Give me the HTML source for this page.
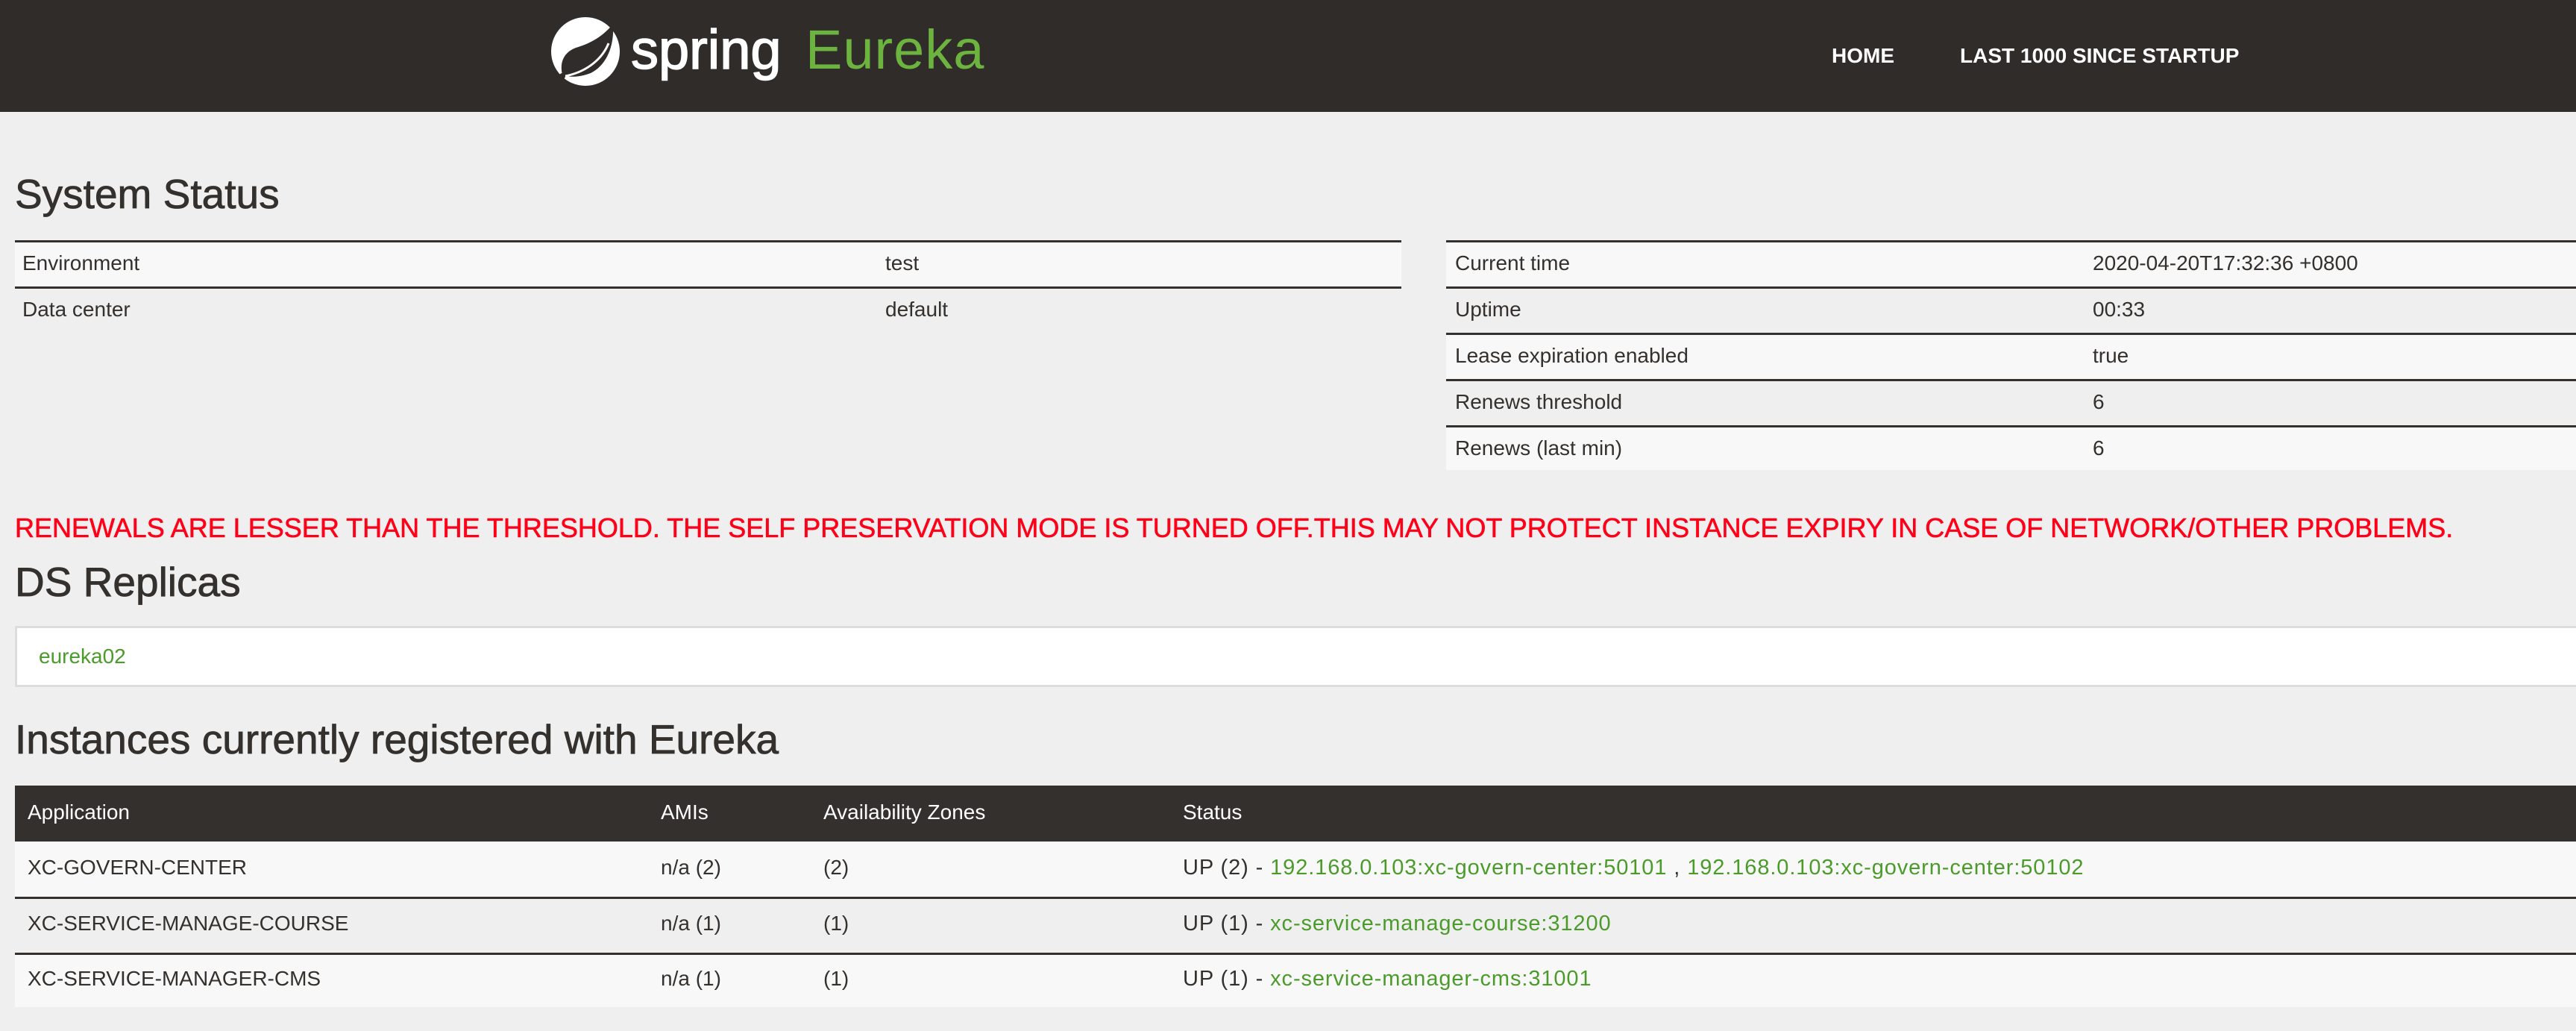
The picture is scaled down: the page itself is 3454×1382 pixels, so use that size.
<!DOCTYPE html>
<html><head><meta charset="utf-8"><style>
*{margin:0;padding:0;box-sizing:border-box}
html,body{width:3454px;height:1382px;overflow:hidden;background:#efefef;font-family:"Liberation Sans",sans-serif;color:#34302d}
.a{position:absolute;white-space:nowrap}
.hdr{position:absolute;left:0;top:0;width:3454px;height:150px;background:#302c29}
.nav{color:#fff;font-weight:bold;font-size:28px;top:59px}
.h{font-size:55px;color:#34302d;line-height:60px;-webkit-text-stroke:0.8px #34302d}
.t{font-size:28px;line-height:62px}
.row{position:absolute;height:62px}
.g{color:#4b9b2b}
.s{font-size:29px;letter-spacing:0.9px}
</style></head><body>
<div class="hdr"></div>
<svg class="a" style="left:736px;top:20px" width="100" height="100" viewBox="0 0 100 100">
<circle cx="49" cy="49" r="46" fill="#fff"/>
<path d="M86 12 C70 32 50 40 36 44 C20 50 14 64 18 80 C26 84 40 84 56 78 C76 68 88 44 86 12 Z" fill="#302c29"/>
<path d="M80 38 C72 58 52 76 22 82" stroke="#fff" stroke-width="3" fill="none"/>
<circle cx="18" cy="82" r="4" fill="#302c29"/>
</svg>
<div class="a" style="left:846px;top:22px;font-size:74px;color:#fff;line-height:90px;letter-spacing:0px;-webkit-text-stroke:1.5px #fff">spring</div>
<div class="a" style="left:1080px;top:22px;font-size:74px;color:#6db33f;line-height:90px;letter-spacing:1px">Eureka</div>
<div class="a nav" style="left:2456px">HOME</div>
<div class="a nav" style="left:2628px">LAST 1000 SINCE STARTUP</div>

<div class="a h" style="left:20px;top:230px">System Status</div>
<div class="row" style="left:20px;top:322px;width:1859px;background:#f8f8f8;border-top:3px solid #34302d"></div>
<div class="row" style="left:20px;top:384px;width:1859px;border-top:3px solid #34302d"></div>
<div class="a t" style="left:30px;top:322px">Environment</div><div class="a t" style="left:1187px;top:322px">test</div>
<div class="a t" style="left:30px;top:384px">Data center</div><div class="a t" style="left:1187px;top:384px">default</div>

<div class="row" style="left:1939px;top:322px;width:1515px;background:#f8f8f8;border-top:3px solid #34302d"></div>
<div class="row" style="left:1939px;top:384px;width:1515px;border-top:3px solid #34302d"></div>
<div class="row" style="left:1939px;top:446px;width:1515px;background:#f8f8f8;border-top:3px solid #34302d"></div>
<div class="row" style="left:1939px;top:508px;width:1515px;border-top:3px solid #34302d"></div>
<div class="row" style="left:1939px;top:570px;width:1515px;background:#f8f8f8;border-top:3px solid #34302d;height:60px"></div>
<div class="a t" style="left:1951px;top:322px">Current time</div><div class="a t" style="left:2806px;top:322px">2020-04-20T17:32:36 +0800</div>
<div class="a t" style="left:1951px;top:384px">Uptime</div><div class="a t" style="left:2806px;top:384px">00:33</div>
<div class="a t" style="left:1951px;top:446px">Lease expiration enabled</div><div class="a t" style="left:2806px;top:446px">true</div>
<div class="a t" style="left:1951px;top:508px">Renews threshold</div><div class="a t" style="left:2806px;top:508px">6</div>
<div class="a t" style="left:1951px;top:570px">Renews (last min)</div><div class="a t" style="left:2806px;top:570px">6</div>

<div class="a" style="left:20px;top:685px;font-size:36px;line-height:46px;color:#ff0019;-webkit-text-stroke:0.6px #ff0019">RENEWALS ARE LESSER THAN THE THRESHOLD. THE SELF PRESERVATION MODE IS TURNED OFF.THIS MAY NOT PROTECT INSTANCE EXPIRY IN CASE OF NETWORK/OTHER PROBLEMS.</div>
<div class="a h" style="left:20px;top:750px">DS Replicas</div>
<div class="a" style="left:20px;top:839px;width:3440px;height:82px;background:#fff;border:3px solid #ddd"></div>
<div class="a t g" style="left:52px;top:849px">eureka02</div>
<div class="a h" style="left:20px;top:961px">Instances currently registered with Eureka</div>

<div class="a" style="left:20px;top:1053px;width:3434px;height:75px;background:#34302d"></div>
<div class="a t" style="left:37px;top:1058px;color:#fff">Application</div>
<div class="a t" style="left:886px;top:1058px;color:#fff">AMIs</div>
<div class="a t" style="left:1104px;top:1058px;color:#fff">Availability Zones</div>
<div class="a t" style="left:1586px;top:1058px;color:#fff">Status</div>
<div class="a" style="left:20px;top:1128px;width:3434px;height:75px;background:#f8f8f8"></div>
<div class="a" style="left:20px;top:1202px;width:3434px;height:3px;background:#34302d"></div>
<div class="a" style="left:20px;top:1277px;width:3434px;height:3px;background:#34302d"></div>
<div class="a" style="left:20px;top:1280px;width:3434px;height:70px;background:#f8f8f8"></div>
<div class="a t" style="left:37px;top:1132px">XC-GOVERN-CENTER</div><div class="a t" style="left:886px;top:1132px">n/a (2)</div><div class="a t" style="left:1104px;top:1132px">(2)</div>
<div class="a t s" style="left:1586px;top:1132px">UP (2) - <span class="g">192.168.0.103:xc-govern-center:50101</span> , <span class="g">192.168.0.103:xc-govern-center:50102</span></div>
<div class="a t" style="left:37px;top:1207px">XC-SERVICE-MANAGE-COURSE</div><div class="a t" style="left:886px;top:1207px">n/a (1)</div><div class="a t" style="left:1104px;top:1207px">(1)</div>
<div class="a t s" style="left:1586px;top:1207px">UP (1) - <span class="g">xc-service-manage-course:31200</span></div>
<div class="a t" style="left:37px;top:1281px">XC-SERVICE-MANAGER-CMS</div><div class="a t" style="left:886px;top:1281px">n/a (1)</div><div class="a t" style="left:1104px;top:1281px">(1)</div>
<div class="a t s" style="left:1586px;top:1281px">UP (1) - <span class="g">xc-service-manager-cms:31001</span></div>
</body></html>
